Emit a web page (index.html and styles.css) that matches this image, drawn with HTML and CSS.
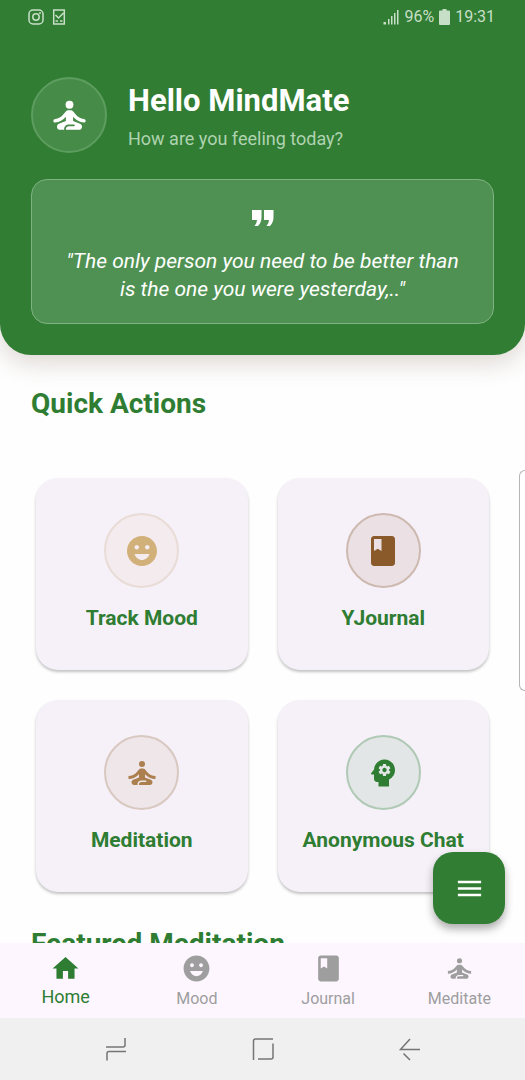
FILE: index.html
```html
<!DOCTYPE html>
<html lang="en">
<head>
<meta charset="utf-8">
<meta name="viewport" content="width=device-width, initial-scale=1">
<title>MindMate</title>
<link rel="stylesheet" href="styles.css">
</head>
<body>
<svg class="sprite" aria-hidden="true">
  <symbol id="meditate" viewBox="0 0 24 24"><circle cx="12" cy="6" r="2"/><path d="M21 16v-2c-2.24 0-4.16-.96-5.6-2.68l-1.34-1.6C13.68 9.26 13.12 9 12.53 9h-1.05c-.6 0-1.15.26-1.53.72l-1.34 1.6C7.16 13.04 5.24 14 3 14v2c2.77 0 5.19-1.17 7-3.25V15l-3.88 1.55C5.45 16.82 5 17.48 5 18.21 5 19.2 5.8 20 6.79 20H9v-.5c0-1.38 1.12-2.5 2.5-2.5h3c.28 0 .5.22.5.5s-.22.5-.5.5h-3c-.83 0-1.5.67-1.5 1.5v.5h7.21c.99 0 1.79-.8 1.79-1.79 0-.73-.45-1.39-1.12-1.66L14 15v-2.25c1.81 2.08 4.23 3.25 7 3.25z"/></symbol>
  <symbol id="meditate-round" viewBox="0 0 24 24"><circle cx="12" cy="6" r="2.2"/><path d="M21 15c0-.55-.45-.98-1-1.02-1.82-.15-3.37-1.1-4.6-2.66l-1.34-1.6C13.68 9.26 13.12 9 12.53 9h-1.05c-.6 0-1.15.26-1.53.72l-1.34 1.6C7.37 12.88 5.82 13.83 4 13.98c-.55.04-1 .47-1 1.02s.45 1 1 .96c2.38-.2 4.42-1.35 6-3.21V15l-3.88 1.55C5.45 16.82 5 17.48 5 18.21 5 19.2 5.8 20 6.79 20H9v-.5c0-1.38 1.12-2.5 2.5-2.5h3c.28 0 .5.22.5.5s-.22.5-.5.5h-3c-.83 0-1.5.67-1.5 1.5v.5h7.21c.99 0 1.79-.8 1.79-1.79 0-.73-.45-1.39-1.12-1.66L14 15v-2.25c1.58 1.86 3.62 3.01 6 3.21.55.04 1-.41 1-.96z"/></symbol>
  <symbol id="mood" viewBox="0 0 24 24"><path d="M11.99 2C6.47 2 2 6.48 2 12s4.47 10 9.99 10C17.52 22 22 17.52 22 12S17.52 2 11.99 2zM8.5 8c.83 0 1.5.67 1.5 1.5S9.33 11 8.5 11 7 10.33 7 9.5 7.67 8 8.5 8zM12 18c-2.28 0-4.22-1.66-5-4h10c-.78 2.34-2.72 4-5 4zm3.5-7c-.83 0-1.5-.67-1.5-1.5S14.67 8 15.5 8s1.5.67 1.5 1.5-.67 1.5-1.5 1.5z"/></symbol>
  <symbol id="book" viewBox="0 0 24 24"><path d="M18 2H6c-1.1 0-2 .9-2 2v16c0 1.1.9 2 2 2h12c1.1 0 2-.9 2-2V4c0-1.1-.9-2-2-2zM6 4h5v8l-2.5-1.5L6 12V4z"/></symbol>
  <symbol id="psychology" viewBox="0 0 24 24"><path d="M13 8.57c-.79 0-1.43.64-1.43 1.43s.64 1.43 1.43 1.43 1.43-.64 1.43-1.43-.64-1.43-1.43-1.43z"/><path d="M13 3C9.25 3 6.2 5.94 6.02 9.64L4.1 12.2c-.25.33-.01.8.4.8H6v3c0 1.1.9 2 2 2h1v3h7v-4.68c2.36-1.12 4-3.53 4-6.32 0-3.87-3.13-7-7-7zm3 7c0 .13-.01.26-.02.39l.83.66c.08.06.1.16.05.25l-.8 1.39c-.05.09-.16.12-.24.09l-.99-.4c-.21.16-.43.29-.67.39L14 13.83c-.01.1-.1.17-.2.17h-1.6c-.1 0-.18-.07-.2-.17l-.15-1.06c-.25-.1-.47-.23-.68-.39l-.99.4c-.09.03-.2 0-.25-.09l-.8-1.39c-.05-.08-.03-.19.05-.25l.84-.66c-.01-.13-.02-.26-.02-.39s.02-.27.04-.39l-.85-.66c-.08-.06-.1-.16-.05-.26l.8-1.38c.05-.09.15-.12.24-.09l1 .4c.2-.15.43-.29.67-.39L12 6.17c.02-.1.1-.17.2-.17h1.6c.1 0 .18.07.2.17l.15 1.06c.24.1.46.23.67.39l1-.4c.09-.03.2 0 .24.09l.8 1.38c.05.09.03.2-.05.26l-.85.66c.03.12.04.25.04.39z"/></symbol>
</svg>
<div class="app">
  <header class="hero">
    <div class="status">
      <div class="status-group status-apps">
        <svg class="status-icon" viewBox="0 0 16 16"><rect x="1" y="1" width="14" height="14" rx="4" fill="none" stroke="currentColor" stroke-width="1.5"/><circle cx="8" cy="8" r="3.2" fill="none" stroke="currentColor" stroke-width="1.5"/><circle cx="12" cy="4" r="1" fill="currentColor"/></svg>
        <svg class="status-icon" viewBox="0 0 16 16"><path d="M2.700 1h10.600v14H2.700zM4.500 6 7.500 9l5-5M4.500 12h2.500M9 12h2.500" fill="none" stroke="currentColor" stroke-width="1.500"/></svg>
      </div>
      <div class="status-group">
        <svg class="status-icon" viewBox="0 0 16 16"><path d="M.5 13h2.500v2.500H.5zM5 10h1.500v5.500H5zM8 7h1.500v8.500H8zM11 4h1.500v11.500H11zM14 1h1.500v14.500H14z" fill="currentColor"/></svg>
        <span>96%</span>
        <svg class="battery" viewBox="0 0 11 16"><path d="M3.500 0h4v1.500H10q1 0 1 1V15q0 1-1 1H1q-1 0-1-1V2.500q0-1 1-1h2.500z" fill="currentColor"/></svg>
        <span>19:31</span>
      </div>
    </div>
    <div class="greeting">
      <div class="avatar"><svg class="icon-xl"><use href="#meditate-round"/></svg></div>
      <div class="greeting-text">
        <h1 class="hello">Hello MindMate</h1>
        <p class="ask">How are you feeling today?</p>
      </div>
    </div>
    <blockquote class="quote">
      <svg class="quote-mark" viewBox="0 0 38 38" aria-hidden="true"><path d="M8 11h9.500v7q0 5.500-3.500 9H10.500q2.500-3 2.500-6H8zM20 11h9.500v7q0 5.500-3.500 9H22.500q2.500-3 2.500-6H20z"/></svg>
      <p class="quote-text">"The only person you need to be better than is the one you were yesterday,.."</p>
    </blockquote>
  </header>

  <main class="content">
    <h2 class="section-title">Quick Actions</h2>
    <div class="actions">
      <button class="card" type="button"><span class="disc disc-sand"><svg class="icon-lg"><use href="#mood"/></svg></span>Track Mood</button>
      <button class="card" type="button"><span class="disc disc-brown"><svg class="icon-lg"><use href="#book"/></svg></span>YJournal</button>
      <button class="card" type="button"><span class="disc disc-tan"><svg class="icon-lg"><use href="#meditate"/></svg></span>Meditation</button>
      <button class="card" type="button"><span class="disc disc-green"><svg class="icon-lg"><use href="#psychology"/></svg></span>Anonymous Chat</button>
    </div>
    <h2 class="section-title">Featured Meditation</h2>
  </main>

  <div class="edge-handle"></div>

  <footer class="bottom">
    <button class="fab" type="button" aria-label="Menu"><svg class="icon-md" viewBox="0 0 24 24"><path d="M3 18h18v-2H3v2zm0-5h18v-2H3v2zm0-7v2h18V6H3z"/></svg></button>
    <nav class="tabs">
      <a class="tab tab-active" href="#home"><svg class="icon-md" viewBox="0 0 24 24"><path d="M10 20v-6h4v6h5v-8h3L12 3 2 12h3v8z"/></svg>Home</a>
      <a class="tab" href="#mood-page"><svg class="icon-md"><use href="#mood"/></svg>Mood</a>
      <a class="tab" href="#journal"><svg class="icon-md"><use href="#book"/></svg>Journal</a>
      <a class="tab" href="#meditate-page"><svg class="icon-md"><use href="#meditate"/></svg>Meditate</a>
    </nav>
    <div class="system">
      <button class="key" type="button" aria-label="Recent apps"><svg class="key-icon" viewBox="0 0 24 24"><path d="M2 10h17q2 0 2-2V1M22 14.500H5q-2 0-2 2V23.500"/></svg></button>
      <button class="key" type="button" aria-label="Home screen"><svg class="key-icon" viewBox="0 0 24 24"><path d="M2.500 23V4q0-2 2-2H22M22 6.500V20q0 2-2 2H7"/></svg></button>
      <button class="key" type="button" aria-label="Back"><svg class="key-icon" viewBox="0 0 24 24"><path d="M22 12.500H2.500L12 2M5.500 16.500 12 23"/></svg></button>
    </div>
  </footer>
</div>
</body>
</html>
```
FILE: styles.css
```css
* {
  box-sizing: border-box;
}

body {
  margin: 0;
  background: #fefefe;
  font-family: Roboto, "Liberation Sans", sans-serif;
}

h1, h2, p, blockquote {
  margin: 0;
}

button {
  border: 0;
  padding: 0;
  font: inherit;
  cursor: pointer;
}

svg {
  display: block;
  flex: none;
  fill: currentColor;
}

.sprite {
  position: absolute;
  width: 0;
  height: 0;
}

.app {
  position: relative;
  display: flex;
  flex-direction: column;
  height: 100vh;
  overflow: hidden;
}

.icon-md { width: 31px; height: 31px; }
.icon-lg { width: 36px; height: 36px; }
.icon-xl { width: 43px; height: 43px; }

/* Header */
.hero {
  position: relative;
  z-index: 1;
  flex: none;
  padding: 0 31px 31px;
  border-radius: 0 0 31px 31px;
  background: #317d33;
  color: #fff;
  box-shadow: 0 8px 24px rgba(90, 60, 40, 0.2);
}

.status {
  display: flex;
  justify-content: space-between;
  align-items: center;
  height: 33px;
  margin: 0 -1px 0 -3px;
  color: #c7dfc7;
  font-size: 16px;
}

.status-group {
  display: flex;
  align-items: center;
  gap: 5px;
}

.status-apps { gap: 7px; }
.status-icon { width: 16px; height: 16px; }
.battery { width: 11px; height: 16px; }

.greeting {
  display: flex;
  align-items: center;
  gap: 21px;
  margin-top: 44px;
}

.greeting-text { padding-top: 3px; }

.avatar {
  display: grid;
  place-items: center;
  width: 76px;
  height: 76px;
  border: 2px solid #5d9d5f;
  border-radius: 50%;
  background: #468b48;
}

.hello {
  font-size: 31px;
  line-height: 40px;
  font-weight: 700;
}

.ask {
  margin-top: 4px;
  color: #afd3b0;
  font-size: 18px;
  line-height: 28px;
}

.quote {
  display: flex;
  flex-direction: column;
  align-items: center;
  gap: 10px;
  margin-top: 26px;
  padding: 19px 26px 20px;
  border: 1px solid #7fb281;
  border-radius: 16px;
  background: #4f9152;
}

.quote-mark { width: 38px; height: 38px; }

.quote-text {
  font-size: 21px;
  line-height: 28px;
  font-style: italic;
  text-align: center;
}

/* Scrolling content */
.content {
  flex: 1;
  min-height: 0;
  overflow: hidden;
  padding: 32px 31px 0;
}

.section-title {
  color: #2e7d32;
  font-size: 28px;
  line-height: 34px;
  font-weight: 700;
}

.actions {
  display: grid;
  grid-template-columns: 1fr 1fr;
  gap: 30px;
  margin: 57px 5px 35px;
}

.card {
  display: flex;
  flex-direction: column;
  align-items: center;
  gap: 18px;
  padding: 35px 8px 40px;
  border-radius: 22px;
  background: #f6f1f9;
  box-shadow: 0 2px 3px rgba(0, 0, 0, 0.24);
  color: #2e7d32;
  font-size: 21px;
  line-height: 24px;
  font-weight: 700;
}

.disc {
  display: grid;
  place-items: center;
  width: 75px;
  height: 75px;
  border: 2px solid;
  border-radius: 50%;
}

.disc-sand { color: #d2b07a; background: #f4ebee; border-color: #e9dcd6; }
.disc-brown { color: #8b5a2b; background: #ebe1e4; border-color: #cdb9b0; }
.disc-tan { color: #ab7f4e; background: #efe6ea; border-color: #d8c8c0; }
.disc-green { color: #2e7d32; background: #e2e6e6; border-color: #b0c9b5; }

.disc-sand svg { fill: #d2b07a; }

.edge-handle {
  position: absolute;
  top: 470px;
  right: -1px;
  width: 7px;
  height: 221px;
  border: 1px solid #b5b5b5;
  border-right: 0;
  border-radius: 6px 0 0 6px;
  background: #fff;
}

/* Bottom area */
.bottom {
  position: relative;
  flex: none;
}

.fab {
  position: absolute;
  right: 20px;
  bottom: calc(100% + 19px);
  display: grid;
  place-items: center;
  width: 72px;
  height: 72px;
  border-radius: 20px;
  background: #317d33;
  color: #fff;
  box-shadow: 0 5px 9px rgba(0, 0, 0, 0.32);
}

.tabs {
  display: grid;
  grid-template-columns: repeat(4, 1fr);
  height: 75px;
  background: #fdf6ff;
}

.tab {
  display: flex;
  flex-direction: column;
  align-items: center;
  gap: 4px;
  padding-top: 10px;
  color: #9e9e9e;
  font-size: 16px;
  line-height: 22px;
  text-decoration: none;
}

.tab-active {
  gap: 2px;
  color: #2e7d32;
  font-size: 18px;
}

.system {
  display: flex;
  justify-content: space-around;
  align-items: center;
  height: 62px;
  padding: 0 42px;
  background: #f0f0f0;
}

.key {
  padding: 8px;
  background: none;
  color: #757575;
}

.key-icon {
  width: 24px;
  height: 24px;
  fill: none;
  stroke: currentColor;
  stroke-width: 1.5;
}
```
